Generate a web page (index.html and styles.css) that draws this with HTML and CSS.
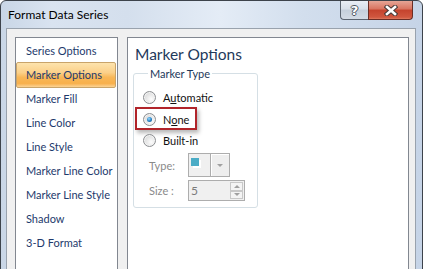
FILE: index.html
```html
<!DOCTYPE html>
<html lang="en">
<head>
    <meta charset="UTF-8">
    <title>Format Data Series</title>
    <link rel="stylesheet" href="styles.css">
</head>
<body>
    <div class="window">
        <div class="titlebar">
            <span class="title">Format Data Series</span>
            <div class="caption-btns">
                <button class="cap-btn help">?</button>
                <button class="cap-btn close">
                    <svg width="14" height="11" viewBox="0 0 14 11">
                        <path d="M3 2 L11 9 M11 2 L3 9" stroke="#4a3a38" stroke-width="4.6" stroke-linecap="square" fill="none"/>
                        <path d="M3 2 L11 9 M11 2 L3 9" stroke="#fff" stroke-width="2.6" stroke-linecap="square" fill="none"/>
                    </svg>
                </button>
            </div>
        </div>

        <div class="dialog">
            <!-- Category list -->
            <ul class="nav">
                <li>Series Options</li>
                <li class="active">Marker Options</li>
                <li>Marker Fill</li>
                <li>Line Color</li>
                <li>Line Style</li>
                <li>Marker Line Color</li>
                <li>Marker Line Style</li>
                <li>Shadow</li>
                <li>3-D Format</li>
            </ul>

            <!-- Options pane -->
            <div class="pane">
                <h2 class="pane-title">Marker Options</h2>
                <fieldset class="group">
                    <legend>Marker Type</legend>
                    <label class="radio-row">
                        <span class="radio"></span>
                        <span>A<u>u</u>tomatic</span>
                    </label>
                    <label class="radio-row">
                        <span class="radio checked"></span>
                        <span>N<u>o</u>ne</span>
                        <span class="callout"></span>
                    </label>
                    <label class="radio-row">
                        <span class="radio"></span>
                        <span>Built-in</span>
                    </label>
                    <div class="field-row">
                        <span class="field-label">Type:</span>
                        <div class="combo">
                            <span class="combo-value"><span class="swatch"></span></span>
                            <span class="combo-btn"><span class="arrow-down"></span></span>
                        </div>
                    </div>
                    <div class="field-row size-row">
                        <span class="field-label">Size :</span>
                        <div class="spin">
                            <span class="spin-value">5</span>
                            <span class="spin-btns">
                                <span class="spin-btn"><span class="arrow-up"></span></span>
                                <span class="spin-btn"><span class="arrow-down"></span></span>
                            </span>
                        </div>
                    </div>
                </fieldset>
            </div>
        </div>
    </div>
</body>
</html>
```

FILE: styles.css
```css
* {
    margin: 0;
    padding: 0;
    box-sizing: border-box;
}

html, body {
    overflow: hidden;
}

body {
    background: #fff;
    font-family: Lato, "Liberation Sans", sans-serif;
}

.window {
    width: 423px;
    height: 300px;
    border: 1px solid #3d434b;
    border-radius: 6px 6px 0 0;
    background: linear-gradient(90deg, #c9d6e6 0%, #d9e3f0 12%, #d4dfed 30%, #e4ecf6 52%, #d2deed 72%, #c6d4e7 100%);
}

.titlebar {
    height: 27px;
    display: flex;
    align-items: flex-start;
    padding-left: 7px;
}

.title {
    font-size: 12px;
    line-height: 15px;
    margin-top: 6px;
    color: #000;
}

.caption-btns {
    display: flex;
    margin-left: auto;
    margin-right: 9px;
    height: 19px;
}

.cap-btn {
    height: 19px;
    border: 1px solid #5b6470;
    border-top: none;
    display: flex;
    align-items: center;
    justify-content: center;
    font-family: "DejaVu Sans", sans-serif;
}

.help {
    width: 28px;
    border-radius: 0 0 0 4px;
    border-right: none;
    background: linear-gradient(#e9eef5, #d8e0ea 45%, #c5cfdb 50%, #d3dbe5);
    color: #fff;
    font-size: 13px;
    font-weight: bold;
    text-shadow: 1px 0 0 #4d5561, -1px 0 0 #4d5561, 0 1px 0 #4d5561, 0 -1px 0 #4d5561;
}

.close {
    width: 45px;
    border-radius: 0 0 4px 0;
    border-color: #6a2e26;
    background: linear-gradient(#e6a596, #d9735f 45%, #c5432d 50%, #d0573f 90%, #e07a60);
}

.dialog {
    height: 272px;
    margin: 0 6px 0 5px;
    border: 1px solid #99a2ad;
    background: #f0f0f0;
    padding: 8px 6px 0 8px;
    display: flex;
    gap: 9px;
}

.nav {
    width: 103px;
    height: 260px;
    list-style: none;
    background: #fff;
    border: 1px solid #828790;
    padding-top: 1px;
}

.nav li {
    height: 24px;
    line-height: 24px;
    padding-left: 10px;
    font-size: 11px;
    color: #1e3a6c;
    white-space: nowrap;
}

.nav li.active {
    height: 26px;
    margin: -1px 1px -1px 0;
    padding-left: 9px;
    border: 1px solid #c9a46a;
    border-radius: 2px;
    background: linear-gradient(#fde3ad, #fbd089 40%, #f8b757 60%, #f8b04c 85%, #fbd395);
}

.pane {
    width: 282px;
    height: 260px;
    background: #fff;
    border: 1px solid #828790;
    padding: 6px 0 0 5px;
}

.pane-title {
    font-size: 15.5px;
    font-weight: normal;
    line-height: 20px;
    color: #1e395b;
    margin-left: 2px;
}

.group {
    width: 125px;
    margin-top: 2px;
    border: 1px solid #d5dfe5;
    border-radius: 3px;
    padding: 5px 0 6px 9px;
}

.group legend {
    font-size: 11px;
    line-height: 15px;
    margin-left: 5px;
    padding: 0 2px;
    color: #1e395b;
}

.radio-row {
    position: relative;
    display: flex;
    align-items: center;
    gap: 7px;
    height: 22px;
    font-size: 11px;
    color: #111;
}

.radio-row:nth-of-type(3) {
    height: 21px;
}

.radio {
    position: relative;
    width: 13px;
    height: 13px;
    border-radius: 50%;
    border: 1px solid #8c8e91;
    background: radial-gradient(circle at 65% 65%, #fdfdfd 0%, #e8e8e8 45%, #cfd0d1 100%);
    box-shadow: inset 0 0 0 1px #f3f3f3;
}

.radio.checked::after {
    content: "";
    position: absolute;
    left: 3px;
    top: 3px;
    width: 5px;
    height: 5px;
    border-radius: 50%;
    background: radial-gradient(circle at 40% 35%, #9fdcff 0%, #2a86c8 50%, #0c4c82 100%);
}

/* red annotation box around the selected option */
.callout {
    position: absolute;
    left: -8px;
    top: -1px;
    width: 62px;
    height: 23px;
    border: 2px solid #b1242a;
    box-shadow: 2px 3px 4px rgba(0, 0, 0, 0.28);
}

.field-row {
    display: flex;
    align-items: center;
    height: 24px;
    margin-top: 2px;
}

.size-row {
    height: 21px;
    margin-top: 3px;
}

.field-label {
    width: 39px;
    margin-left: 6px;
    font-size: 11px;
    color: #8a8a8a;
}

.combo {
    display: flex;
    width: 42px;
    height: 24px;
    border: 1px solid #adadad;
}

.combo-value {
    width: 21px;
    background: #f0f0f0;
    padding: 4px 0 0 2px;
}

.swatch {
    display: block;
    width: 8px;
    height: 8px;
    background: #4bacc6;
    box-shadow: 2px 2px 0 #fff;
}

.combo-btn {
    flex: 1;
    border-left: 1px solid #adadad;
    box-shadow: inset 1px 1px 0 #fff;
    background: #eeeeee;
    display: flex;
    align-items: center;
    justify-content: center;
}

.arrow-down {
    width: 0;
    height: 0;
    border-left: 3px solid transparent;
    border-right: 3px solid transparent;
    border-top: 3px solid #a0a0a0;
}

.arrow-up {
    width: 0;
    height: 0;
    border-left: 3px solid transparent;
    border-right: 3px solid transparent;
    border-bottom: 3px solid #a0a0a0;
}

.spin {
    display: flex;
    width: 57px;
    height: 21px;
    border: 1px solid #adadad;
    background: #f0f0f0;
}

.spin-value {
    padding-left: 2px;
    font-size: 12px;
    line-height: 19px;
    color: #7a7a7a;
}

.spin-btns {
    margin-left: auto;
    width: 14px;
    display: flex;
    flex-direction: column;
    padding: 1px 1px 1px 0;
}

.spin-btn {
    flex: 1;
    border: 1px solid #c8c8c8;
    background: #f4f4f4;
    display: flex;
    align-items: center;
    justify-content: center;
}
```
